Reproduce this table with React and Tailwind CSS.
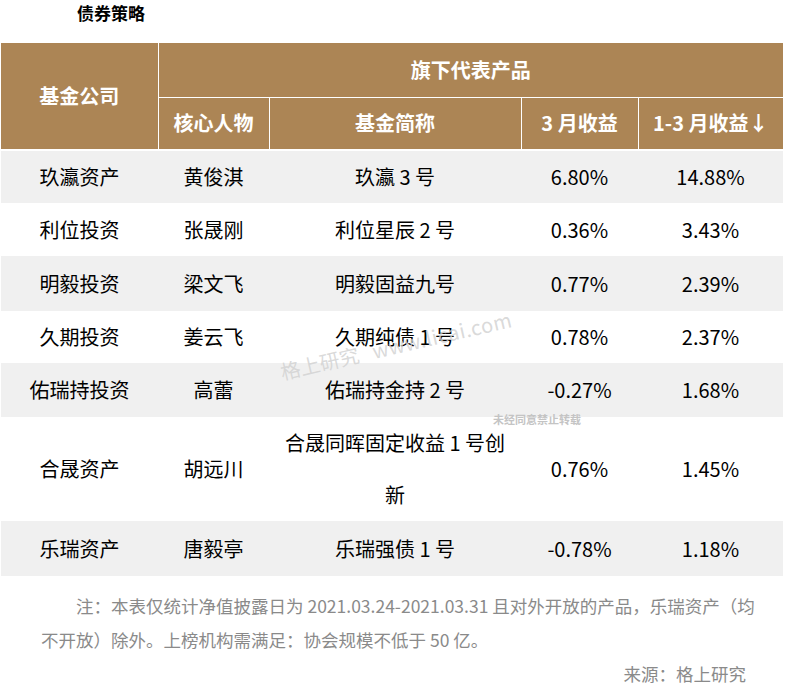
const rows = [
  { co: '玖瀛资产', mgr: '黄俊淇', fund: ['玖瀛 3 号'], m3: '6.80%', q1: '14.88%', h: 'h-[53px]', gray: true },
  { co: '利位投资', mgr: '张晟刚', fund: ['利位星辰 2 号'], m3: '0.36%', q1: '3.43%', h: 'h-[53px]', gray: false },
  { co: '明毅投资', mgr: '梁文飞', fund: ['明毅固益九号'], m3: '0.77%', q1: '2.39%', h: 'h-[55px]', gray: true },
  { co: '久期投资', mgr: '姜云飞', fund: ['久期纯债 1 号'], m3: '0.78%', q1: '2.37%', h: 'h-[51px]', gray: false },
  { co: '佑瑞持投资', mgr: '高蕾', fund: ['佑瑞持金持 2 号'], m3: '-0.27%', q1: '1.68%', h: 'h-[54px]', gray: true },
  { co: '合晟资产', mgr: '胡远川', fund: ['合晟同晖固定收益 1 号创', '新'], m3: '0.76%', q1: '1.45%', h: 'h-[104px]', gray: false },
  { co: '乐瑞资产', mgr: '唐毅亭', fund: ['乐瑞强债 1 号'], m3: '-0.78%', q1: '1.18%', h: 'h-[55px]', gray: true },
];

export default function App() {
  return (
    <div className="relative w-[791px] h-[698px] bg-white font-['Noto_Sans_CJK_SC','Noto_Sans',sans-serif] text-black overflow-hidden">
      <div className="h-[43px] pl-[77px] pt-[2px] text-[17px] leading-[22px] font-bold">债券策略</div>

      <table className="ml-[1px] w-[782px] table-fixed border-collapse">
        <colgroup>
          <col className="w-[157px]" />
          <col className="w-[111px]" />
          <col className="w-[252px]" />
          <col className="w-[117px]" />
          <col className="w-[145px]" />
        </colgroup>
        <thead className="bg-[#ac8555] text-white text-[20px] font-bold">
          <tr className="h-[54px]">
            <th rowSpan={2} className="border-r border-b-2 border-white font-bold">基金公司</th>
            <th colSpan={4} className="border-b border-white font-bold">旗下代表产品</th>
          </tr>
          <tr className="h-[53px]">
            <th className="border-r border-b-2 border-white font-bold">核心人物</th>
            <th className="border-r border-b-2 border-white font-bold">基金简称</th>
            <th className="border-r border-b-2 border-white font-bold">3 月收益</th>
            <th className="border-b-2 border-white font-bold">1-3 月收益↓</th>
          </tr>
        </thead>
        <tbody className="text-[20px]">
          {rows.map((r) => (
            <tr key={r.co} className={`${r.h} ${r.gray ? 'bg-[#f0f0f0]' : 'bg-white'}`}>
              <td className="text-center">{r.co}</td>
              <td className="text-center">{r.mgr}</td>
              <td className="text-center leading-[52px] whitespace-pre">
                {r.fund.map((line) => (
                  <div key={line}>{line}</div>
                ))}
              </td>
              <td className="text-center">{r.m3}</td>
              <td className="text-center">{r.q1}</td>
            </tr>
          ))}
        </tbody>
      </table>

      <div className="mt-[13px] pl-[41px] text-[17.5px] leading-[34px] text-[#8a8a8a]">
        <p className="indent-[35px] whitespace-nowrap">
          注：本表仅统计净值披露日为 2021.03.24-2021.03.31 且对外开放的产品，乐瑞资产（均
        </p>
        <p className="whitespace-nowrap">不开放）除外。上榜机构需满足：协会规模不低于 50 亿。</p>
        <p className="text-right pr-[45px]">来源：格上研究</p>
      </div>

      {/* watermark */}
      <div className="pointer-events-none absolute left-[283px] top-[361px] flex gap-[14px] origin-bottom-left -rotate-[13deg] whitespace-nowrap text-[20px] leading-[21px] text-[#d0d0d0]/80">
        <span>格上研究</span>
        <span className="tracking-[0.5px]">www.licai.com</span>
      </div>
      <div className="pointer-events-none absolute left-[493px] top-[413px] text-[11px] leading-[13px] font-bold text-[#c4c4c4]">
        未经同意禁止转载
      </div>
    </div>
  );
}
